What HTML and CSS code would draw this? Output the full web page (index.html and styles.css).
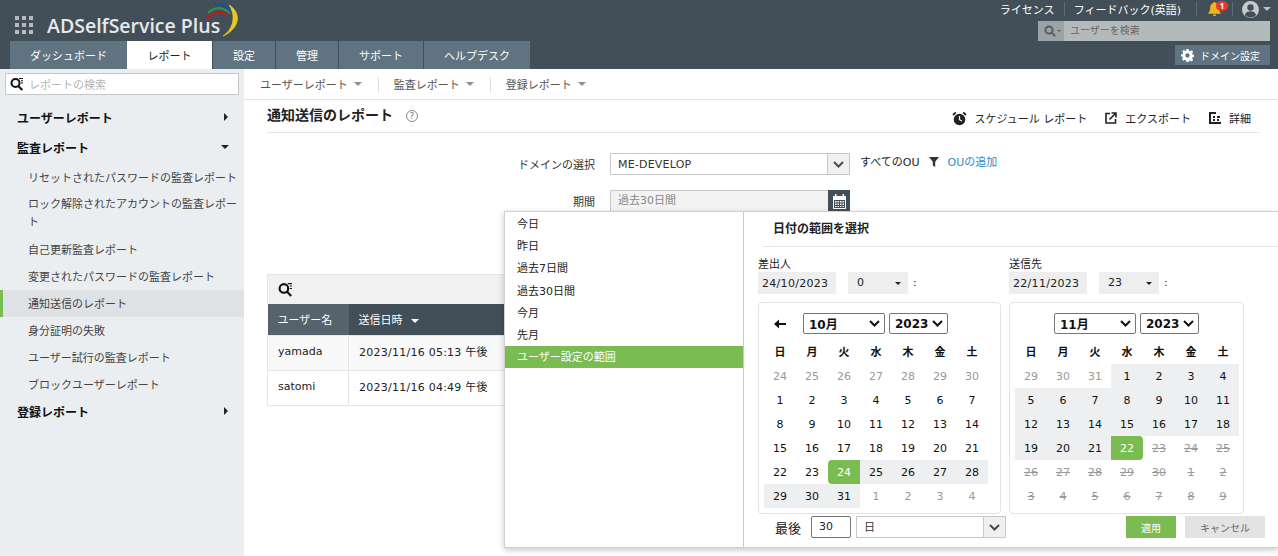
FILE: index.html
```html
<!DOCTYPE html>
<html lang="ja">
<head>
<meta charset="utf-8">
<title>ADSelfService Plus</title>
<link rel="stylesheet" href="styles.css">
</head>
<body>
<header class="topbar">
  <div class="brand-col">
    <div class="brand">
      <svg class="apps" width="18" height="18" viewBox="0 0 18 18"><g fill="#b5bbbf"><rect x="0" y="0" width="4" height="4"/><rect x="7" y="0" width="4" height="4"/><rect x="14" y="0" width="4" height="4"/><rect x="0" y="7" width="4" height="4"/><rect x="7" y="7" width="4" height="4"/><rect x="14" y="7" width="4" height="4"/><rect x="0" y="14" width="4" height="4"/><rect x="7" y="14" width="4" height="4"/><rect x="14" y="14" width="4" height="4"/></g></svg>
      <span class="logo-text">ADSelfService Plus</span>
      <svg class="logo-arcs" width="36" height="34" viewBox="0 0 36 34" fill="none">
        <path d="M2 17Q10 6 24 12" stroke="#b3202a" stroke-width="2.200"/>
        <path d="M4 10Q15 0 27 11" stroke="#3c8c3c" stroke-width="2.200"/>
        <path d="M11 2Q27 -1 32 20" stroke="#1d4f9c" stroke-width="2.800"/>
        <path d="M25 2C37 9 37 25 19 33C30 26 32 12 25 2z" fill="#e8c81c" stroke="#e8c81c" stroke-width="0.800"/>
      </svg>
    </div>
    <nav class="tabs">
      <a class="tab tab-dash">ダッシュボード</a>
      <a class="tab tab-active">レポート</a>
      <a class="tab tab-set">設定</a>
      <a class="tab tab-set">管理</a>
      <a class="tab tab-sup">サポート</a>
      <a class="tab tab-help">ヘルプデスク</a>
    </nav>
  </div>
  <div class="top-right">
    <div class="top-links">
      <span class="top-link">ライセンス</span>
      <span class="top-sep"></span>
      <span class="top-link">フィードバック(英語)</span>
      <span class="top-sep top-sep-b"></span>
      <span class="bell">
        <svg width="15" height="16" viewBox="0 0 16 16"><path fill="#f0b51e" d="M8 0.5c.8 0 1.2.5 1.2 1.100C11.500 2.200 12.600 4 12.600 6.500c0 3 .8 4.500 2 5.800v.7H1.400v-.7c1.200-1.300 2-2.800 2-5.800C3.400 4 4.500 2.200 6.800 1.600 6.800 1 7.200.5 8 .5zM6.200 13.800h3.600C9.600 15 8.900 15.600 8 15.600S6.400 15 6.200 13.800z"/></svg>
        <span class="badge">1</span>
      </span>
      <span class="top-sep top-sep-c"></span>
      <svg class="avatar" width="17" height="17" viewBox="0 0 17 17"><circle cx="8.500" cy="8.500" r="8.500" fill="#c4cacd"/><circle cx="8.500" cy="6.500" r="3.200" fill="#434f58"/><path d="M2.800 14c1-2.800 3.200-3.800 5.700-3.800s4.700 1 5.700 3.800c-1.500 1.600-3.500 2.500-5.700 2.500s-4.200-.9-5.700-2.500z" fill="#434f58"/></svg>
      <span class="caret-light"></span>
    </div>
    <div class="user-search">
      <span class="us-icon">
        <svg width="12" height="12" viewBox="0 0 12 12" fill="none" stroke="#545d63" stroke-width="2"><circle cx="5" cy="5" r="3.600"/><path d="M7.800 7.800l3.400 3.400"/></svg>
        <span class="us-caret"></span>
      </span>
      <span class="us-text">ユーザーを検索</span>
    </div>
    <button class="domain-btn">
      <svg width="13" height="13" viewBox="0 0 24 24"><path fill="#fff" d="M10 0h4l.7 3.400 2 .8L19.600 2.300l2.800 2.800-1.900 2.900.8 2 3.400.7v4l-3.400.7-.8 2 1.900 2.900-2.800 2.800-2.900-1.900-2 .8L14 24h-4l-.7-3.400-2-.8-2.900 1.900-2.800-2.800 1.900-2.900-.8-2L0 14v-4l3.400-.7.8-2L2.300 4.400l2.800-2.800L8 3.500l2-.8L10 0zm2 8a4 4 0 100 8 4 4 0 000-8z"/></svg>
      <span>ドメイン設定</span>
    </button>
  </div>
</header>

<div class="body-row">
  <aside class="sidebar">
    <div class="side-search">
      <svg width="14" height="14" viewBox="0 0 14 14" fill="none" stroke="#111" stroke-width="2"><circle cx="5.500" cy="6" r="4"/><path d="M8.500 9.200l3.800 3.800"/><path d="M9 1.500h4M11 3.800h2M11 6h2" stroke-width="1"/></svg>
      <span>レポートの検索</span>
    </div>
    <div class="side-group side-first"><span>ユーザーレポート</span><i class="tri-right"></i></div>
    <div class="side-group"><span>監査レポート</span><i class="tri-down"></i></div>
    <ul class="side-list">
      <li>リセットされたパスワードの監査レポート</li>
      <li class="side-double">ロック解除されたアカウントの監査レポート</li>
      <li>自己更新監査レポート</li>
      <li>変更されたパスワードの監査レポート</li>
      <li class="side-current">通知送信のレポート</li>
      <li>身分証明の失敗</li>
      <li>ユーザー試行の監査レポート</li>
      <li>ブロックユーザーレポート</li>
    </ul>
    <div class="side-group"><span>登録レポート</span><i class="tri-right"></i></div>
  </aside>

  <main class="main">
    <div class="subnav">
      <span class="subnav-item">ユーザーレポート<i class="tri-grey"></i></span>
      <span class="subnav-item">監査レポート<i class="tri-grey"></i></span>
      <span class="subnav-item">登録レポート<i class="tri-grey"></i></span>
    </div>
    <div class="content">
      <div class="title-row">
        <h1 class="title">通知送信のレポート</h1>
        <span class="help">?</span>
        <div class="actions">
          <span class="action">
            <svg width="15" height="15" viewBox="0 0 15 15"><circle cx="7.500" cy="8.500" r="5.800" fill="#222"/><path d="M7.500 5v3.700l2.500 1.300" fill="none" stroke="#fff" stroke-width="1.200"/><path d="M1 4l2.800-2.600M14 4l-2.800-2.600" stroke="#222" stroke-width="1.800"/></svg>
            スケジュール レポート
          </span>
          <span class="action">
            <svg width="12" height="12" viewBox="0 0 12 12" fill="none" stroke="#222" stroke-width="1.600"><path d="M5 1.500H1v9.500h9.500V7"/><path d="M4.500 7.500L10 2M6.500 1h4.500v4.500"/></svg>
            エクスポート
          </span>
          <span class="action">
            <svg width="12" height="12" viewBox="0 0 12 12" fill="#222"><path d="M0 0h2v10h10v2H0z"/><path d="M2 0h5v2H2zM4 4h2v2H4zM8 4h3v2H8zM4 7h2v2H4zM8 7h2v2H8z"/></svg>
            詳細
          </span>
        </div>
      </div>

      <div class="form">
        <div class="form-row">
          <label class="form-label">ドメインの選択</label>
          <div class="select">
            <span class="select-value select-spaced">ME-DEVELOP</span>
            <span class="select-btn"><svg width="11" height="7" viewBox="0 0 11 7" fill="none" stroke="#434f58" stroke-width="2"><path d="M1 1l4.500 4.500L10 1"/></svg></span>
          </div>
          <span class="ou-text">すべてのOU</span>
          <svg class="funnel" width="10" height="10" viewBox="0 0 10 10"><path d="M0 0h10L6.200 4.800V10L3.800 8.500V4.800z" fill="#333"/></svg>
          <a class="ou-link">OUの追加</a>
        </div>
        <div class="form-row form-row-2">
          <label class="form-label">期間</label>
          <div class="period">
            <span class="period-value">過去30日間</span>
            <span class="period-btn"><svg width="15" height="15" viewBox="0 0 15 15"><path fill="#fff" d="M1 2h2V0h1.500v2h6V0H12v2h2v13H1zm1 4v8h11V6z"/><g fill="#fff"><rect x="3" y="7" width="1.500" height="1.500"/><rect x="5.500" y="7" width="1.500" height="1.500"/><rect x="8" y="7" width="1.500" height="1.500"/><rect x="10.500" y="7" width="1.500" height="1.500"/><rect x="3" y="9.500" width="1.500" height="1.500"/><rect x="5.500" y="9.500" width="1.500" height="1.500"/><rect x="8" y="9.500" width="1.500" height="1.500"/><rect x="10.500" y="9.500" width="1.500" height="1.500"/><rect x="3" y="12" width="1.500" height="1"/><rect x="5.500" y="12" width="1.500" height="1"/><rect x="8" y="12" width="1.500" height="1"/><rect x="10.500" y="12" width="1.500" height="1"/></g></svg></span>
          </div>
        </div>
      </div>

      <section class="report">
        <div class="report-tools">
          <svg width="15" height="15" viewBox="0 0 14 14" fill="none" stroke="#111" stroke-width="2"><circle cx="5.500" cy="6" r="4"/><path d="M8.500 9.200l3.800 3.800"/><path d="M9 1.500h4M11 3.800h2M11 6h2" stroke-width="1"/></svg>
        </div>
        <table class="report-table">
          <thead>
            <tr><th class="col-user">ユーザー名</th><th class="col-date">送信日時<i class="tri-white"></i></th></tr>
          </thead>
          <tbody>
            <tr><td class="row-odd">yamada</td><td class="row-odd cell-date">2023/11/16 05:13 午後</td></tr>
            <tr><td>satomi</td><td class="cell-date">2023/11/16 04:49 午後</td></tr>
          </tbody>
        </table>
      </section>
    </div>
  </main>
</div>

<div class="picker">
  <ul class="ranges">
    <li>今日</li>
    <li>昨日</li>
    <li>過去7日間</li>
    <li>過去30日間</li>
    <li>今月</li>
    <li>先月</li>
    <li class="range-on">ユーザー設定の範囲</li>
  </ul>
  <div class="range-pane">
    <div class="pane-title">日付の範囲を選択</div>
    <div class="from-to">
      <div class="ft-col ft-from">
        <div class="ft-label">差出人</div>
        <div class="ft-inputs"><span class="ft-date">24/10/2023</span><span class="ft-hour">0<i class="tri-small"></i></span><b class="colon">:</b></div>
      </div>
      <div class="ft-col">
        <div class="ft-label">送信先</div>
        <div class="ft-inputs"><span class="ft-date">22/11/2023</span><span class="ft-hour">23<i class="tri-small"></i></span><b class="colon">:</b></div>
      </div>
    </div>
    <div class="cals">
      <div class="cal cal-left">
        <div class="cal-head">
          <svg class="arrow" width="12" height="10" viewBox="0 0 12 10"><path d="M0 5l5-4.500V4h7v2H5v3.500z" fill="#111"/></svg>
          <span class="month-box mb-m">10月<svg width="11" height="7" viewBox="0 0 11 7" fill="none" stroke="#111" stroke-width="2"><path d="M1 1l4.500 4.500L10 1"/></svg></span>
          <span class="month-box mb-y">2023<svg width="11" height="7" viewBox="0 0 11 7" fill="none" stroke="#111" stroke-width="2"><path d="M1 1l4.500 4.500L10 1"/></svg></span>
        </div>
        <div class="grid">
          <b>日</b><b>月</b><b>火</b><b>水</b><b>木</b><b>金</b><b>土</b>
          <i class="o">24</i><i class="o">25</i><i class="o">26</i><i class="o">27</i><i class="o">28</i><i class="o">29</i><i class="o">30</i>
          <i>1</i><i>2</i><i>3</i><i>4</i><i>5</i><i>6</i><i>7</i>
          <i>8</i><i>9</i><i>10</i><i>11</i><i>12</i><i>13</i><i>14</i>
          <i>15</i><i>16</i><i>17</i><i>18</i><i>19</i><i>20</i><i>21</i>
          <i>22</i><i>23</i><i class="s start">24</i><i class="r">25</i><i class="r">26</i><i class="r">27</i><i class="r">28</i>
          <i class="r">29</i><i class="r">30</i><i class="r">31</i><i class="o">1</i><i class="o">2</i><i class="o">3</i><i class="o">4</i>
        </div>
      </div>
      <div class="cal cal-right">
        <div class="cal-head cal-head-r">
          <span class="month-box mb-m">11月<svg width="11" height="7" viewBox="0 0 11 7" fill="none" stroke="#111" stroke-width="2"><path d="M1 1l4.500 4.500L10 1"/></svg></span>
          <span class="month-box mb-y">2023<svg width="11" height="7" viewBox="0 0 11 7" fill="none" stroke="#111" stroke-width="2"><path d="M1 1l4.500 4.500L10 1"/></svg></span>
        </div>
        <div class="grid">
          <b>日</b><b>月</b><b>火</b><b>水</b><b>木</b><b>金</b><b>土</b>
          <i class="o">29</i><i class="o">30</i><i class="o">31</i><i class="r">1</i><i class="r">2</i><i class="r">3</i><i class="r">4</i>
          <i class="r">5</i><i class="r">6</i><i class="r">7</i><i class="r">8</i><i class="r">9</i><i class="r">10</i><i class="r">11</i>
          <i class="r">12</i><i class="r">13</i><i class="r">14</i><i class="r">15</i><i class="r">16</i><i class="r">17</i><i class="r">18</i>
          <i class="r">19</i><i class="r">20</i><i class="r">21</i><i class="s end">22</i><i class="x">23</i><i class="x">24</i><i class="x">25</i>
          <i class="x">26</i><i class="x">27</i><i class="x">28</i><i class="x">29</i><i class="x">30</i><i class="x">1</i><i class="x">2</i>
          <i class="x">3</i><i class="x">4</i><i class="x">5</i><i class="x">6</i><i class="x">7</i><i class="x">8</i><i class="x">9</i>
        </div>
      </div>
    </div>
    <div class="pane-foot">
      <span class="last-label">最後</span>
      <span class="last-num">30</span>
      <div class="select last-unit">
        <span class="select-value">日</span>
        <span class="select-btn"><svg width="11" height="7" viewBox="0 0 11 7" fill="none" stroke="#434f58" stroke-width="2"><path d="M1 1l4.500 4.500L10 1"/></svg></span>
      </div>
      <button class="btn-apply">適用</button>
      <button class="btn-cancel">キャンセル</button>
    </div>
  </div>
</div>
</body>
</html>
```

FILE: styles.css
```css
* { box-sizing: border-box; }
html, body { margin: 0; padding: 0; height: 556px; overflow: hidden; }
body {
  position: relative;
  background: #fff;
  color: #222;
  font-family: "DejaVu Sans", "Noto Sans CJK JP", sans-serif;
  font-size: 11px;
  display: flex;
  flex-direction: column;
}
ul { list-style: none; margin: 0; padding: 0; }
i { font-style: normal; }

/* top bar */
.topbar {
  height: 69px;
  flex: none;
  background: #434f58;
  display: flex;
  justify-content: space-between;
  padding-left: 10px;
}
.brand-col { display: flex; flex-direction: column; }
.brand { height: 41px; display: flex; align-items: flex-start; padding-left: 5px; }
.apps { margin-top: 16px; }
.logo-text { margin-left: 14px; margin-top: 13px; font-size: 19.500px; line-height: 26px; font-weight: 600; color: #e6e8ea; font-family: "Open Sans", sans-serif; white-space: nowrap; }
.logo-arcs { margin-left: -16px; margin-top: 3px; flex: none; }
.tabs { display: flex; gap: 1px; height: 28px; }
.tab { display: flex; align-items: center; justify-content: center; background: #5f7380; color: #fff; font-size: 11px; }
.tab-dash { width: 117px; }
.tab-active { width: 85px; background: #fff; color: #222; margin-left: -1px; }
.tab-set { width: 62px; }
.tab-sup { width: 84px; }
.tab-help { width: 106px; }

.top-right { width: 285px; padding-right: 8px; display: flex; flex-direction: column; align-items: flex-end; }
.top-links { height: 21px; display: flex; align-items: center; color: #fff; font-size: 11px; white-space: nowrap; padding-bottom: 3px; margin-right: -1px; }
.top-link { color: #fff; }
.top-sep { width: 1px; height: 14px; background: #5f6b74; margin: 0 9px; }
.top-sep-b { margin: 0 10px 0 15px; }
.top-sep-c { margin: 0 9px 0 10px; }
.bell { position: relative; display: flex; width: 15px; height: 16px; }
.badge { position: absolute; left: 9px; top: 0; width: 12px; height: 10px; border-radius: 5px; background: #e8372f; color: #fff; font-size: 8px; line-height: 10px; text-align: center; font-weight: 700; font-family: "Open Sans", sans-serif; }
.avatar { display: block; }
.caret-light { width: 0; height: 0; margin-left: 4px; border: 4px solid transparent; border-top-color: #b7bec3; border-bottom: 0; }
.user-search { width: 232px; height: 20px; display: flex; background: #b4b9bc; }
.us-icon { width: 26px; background: #9ca3a7; display: flex; align-items: center; padding-left: 6px; gap: 1px; }
.us-caret { border: 2px solid transparent; border-top-color: #545d63; border-bottom: 0; }
.us-text { padding-left: 6px; line-height: 20px; font-size: 10px; color: #666; }
.domain-btn { width: 95px; height: 20px; margin-top: 4px; border: 0; background: #5f7380; color: #fff; display: flex; align-items: center; padding: 0 0 0 6px; gap: 6px; font: inherit; font-size: 10px; }

/* body */
.body-row { flex: 1; display: flex; min-height: 0; }
.sidebar { width: 244px; flex: none; background: #ebeef0; padding-top: 4px; }
.side-search { margin-left: 5px; width: 234px; height: 22px; background: #fff; border: 1px solid #c5c8ca; display: flex; align-items: center; padding-left: 4px; gap: 5px; color: #b5b5b5; font-size: 11px; }
.side-group { display: flex; justify-content: space-between; align-items: center; height: 30px; padding: 0 16px 0 17px; color: #111; font-weight: 700; font-size: 12px; }
.side-first { margin-top: 7px; }
.tri-right { border: 4px solid transparent; border-left-color: #222; border-right: 0; }
.tri-down { border: 4px solid transparent; border-top-color: #222; border-bottom: 0; margin-right: -1px; }
.side-list { margin-top: 2px; margin-bottom: -2px; }
.side-list li { padding: 5px 2px 3px 28px; line-height: 19px; color: #444; font-size: 11px; word-break: break-all; }
.side-list .side-double { line-height: 18px; padding-bottom: 4px; }
.side-list .side-current { background: #dfe2e4; border-left: 3px solid #7bbc52; padding-left: 25px; }

.main { flex: 1; min-width: 0; display: flex; flex-direction: column; }
.subnav { height: 31px; flex: none; border-bottom: 1px solid #e3e3e3; display: flex; align-items: center; padding-left: 16px; color: #555; font-size: 11px; }
.subnav-item { display: inline-flex; align-items: center; height: 15px; }
.subnav-item + .subnav-item { border-left: 1px solid #ddd; padding-left: 15px; margin-left: 16px; }
.tri-grey { border: 4px solid transparent; border-top-color: #8a8f93; border-bottom: 0; margin-left: 6px; }

.content { padding: 0 18px 0 23px; flex: 1; }
.title-row { height: 33px; display: flex; align-items: center; border-bottom: 1px solid #e6e6e6; }
.title { margin: 0 0 4px; font-size: 14px; font-weight: 700; color: #222; }
.help { margin-left: 13px; width: 12px; height: 12px; border: 1px solid #888; border-radius: 50%; color: #777; font-size: 9px; line-height: 10px; text-align: center; }
.actions { margin-left: auto; margin-right: 9px; padding-top: 4px; display: flex; gap: 18px; color: #222; }
.action { display: inline-flex; align-items: center; gap: 8px; font-size: 11px; }

.form { padding-top: 20px; }
.form-row { display: flex; align-items: center; height: 22px; }
.form-row-2 { margin-top: 15px; }
.form-label { width: 328px; text-align: right; font-size: 11px; color: #333; margin-right: 15px; }
.select { display: flex; width: 240px; height: 22px; border: 1px solid #c8c8c8; background: #fff; }
.select-value { flex: 1; padding: 1px 0 0 7px; line-height: 20px; font-size: 11px; color: #333; }
.select-spaced { letter-spacing: 0.2px; }
.select-btn { width: 22px; border-left: 1px solid #c8c8c8; background: #f0f0f0; display: flex; align-items: center; justify-content: center; }
.ou-text { margin-left: 10px; margin-top: -6px; font-size: 11px; color: #222; }
.funnel { margin-left: 9px; margin-top: -4px; }
.ou-link { margin-left: 9px; margin-top: -6px; color: #2d8ac7; font-size: 11px; }
.period { display: flex; width: 240px; height: 22px; }
.period-value { flex: 1; background: #f3f3f3; border: 1px solid #c8c8c8; border-right: 0; padding-left: 7px; line-height: 20px; color: #888; }
.period-btn { width: 22px; background: #434f58; display: flex; align-items: center; justify-content: center; }

.report { margin-top: 62px; }
.report-tools { height: 30px; background: #f1f1f1; border: 1px solid #e6e6e6; border-bottom: 0; display: flex; align-items: center; padding-left: 10px; }
.report-table { border-collapse: collapse; width: 100%; font-size: 11px; table-layout: fixed; }
.report-table th { height: 31px; background: #434f58; color: #fff; font-weight: 400; text-align: left; padding: 0 10px; font-size: 11px; }
.report-table .col-user { width: 81px; background: #56636c; }
.tri-white { display: inline-block; vertical-align: middle; border: 4px solid transparent; border-top-color: #fff; border-bottom: 0; margin-left: 8px; }
.report-table td { height: 35px; padding: 0 10px 3px; border: 1px solid #e6e6e6; color: #222; white-space: nowrap; }
.report-table .cell-date { letter-spacing: 0.25px; }
.row-odd { background: #f9f9f9; }

/* date picker popup */
.picker {
  position: absolute;
  left: 504px;
  top: 211px;
  width: 774px;
  height: 337px;
  background: #fff;
  border: 1px solid #d0d0d0;
  border-right: 0;
  box-shadow: 0 2px 6px rgba(0,0,0,.22);
  display: flex;
}
.ranges { width: 239px; flex: none; border-right: 1px solid #c9c9c9; padding-top: 1px; }
.ranges li { height: 22.200px; padding: 1px 0 0 12px; line-height: 22px; color: #222; font-size: 11px; }
.ranges .range-on { background: #7bbc52; color: #fff; }
.range-pane { flex: 1; min-width: 0; padding-left: 14px; }
.pane-title { margin-left: 5px; height: 35px; border-bottom: 1px solid #e3e3e3; padding: 9px 0 0 10px; font-size: 12px; font-weight: 700; color: #222; line-height: 16px; }
.from-to { display: flex; margin-top: 9px; }
.ft-col { width: 251px; }
.ft-label { font-size: 11px; line-height: 15px; color: #222; padding-top: 1px; height: 15px; }
.ft-inputs { display: flex; align-items: flex-start; margin-top: 1px; }
.ft-date { width: 78px; height: 22px; background: #eeeeee; line-height: 23px; padding-left: 4px; font-size: 11px; letter-spacing: 0.3px; }
.ft-hour { margin-left: 12px; width: 60px; height: 22px; background: #eeeeee; line-height: 22px; padding-left: 9px; display: flex; align-items: center; justify-content: space-between; padding-right: 7px; }
.tri-small { border: 3px solid transparent; border-top-color: #222; border-bottom: 0; }
.colon { margin-left: 5px; line-height: 22px; font-weight: 400; }

.cals { display: flex; gap: 8px; margin-top: 8px; }
.cal { height: 212px; border: 1px solid #e3e3e3; border-radius: 4px; padding: 10px 0 0 5px; }
.cal-left { width: 243px; }
.cal-right { width: 235px; }
.cal-head { display: flex; align-items: center; height: 21px; padding-left: 10px; gap: 4px; }
.cal-head-r { padding-left: 39px; }
.arrow { margin-right: 13px; }
.month-box { height: 21px; border: 1px solid #767676; border-radius: 2px; display: flex; align-items: center; justify-content: space-between; padding: 0 4px 0 5px; font-size: 12px; font-weight: 700; color: #111; background: #fff; }
.mb-m { width: 82px; }
.mb-y { width: 59px; }
.grid { display: grid; grid-template-columns: repeat(7, 32px); grid-auto-rows: 24px; margin-top: 6px; font-size: 11px; }
.grid b, .grid i { display: flex; align-items: center; justify-content: center; color: #111; font-weight: 400; }
.grid b { height: 24px; padding-bottom: 2px; font-weight: 700; }
.grid .o { color: #999; }
.grid .r { background: #eeeff1; }
.grid .s { background: #7bbc52; color: #fff; }
.grid .start { border-radius: 4px 0 0 4px; }
.grid .end { border-radius: 0 4px 4px 0; }
.grid .x { color: #999; text-decoration: line-through; }

.pane-foot { display: flex; align-items: center; margin-top: 2px; height: 22px; }
.last-label { margin-left: 17px; font-size: 13px; color: #222; }
.last-num { margin-left: 10px; width: 40px; height: 22px; border: 1px solid #767676; border-radius: 2px; line-height: 20px; padding-left: 7px; font-size: 11px; }
.last-unit { width: 150px; margin-left: 5px; }
.btn-apply { margin-left: 120px; width: 50px; height: 22px; border: 0; background: #7bbc52; color: #fff; font: inherit; font-size: 10px; }
.btn-cancel { margin-left: 9px; width: 80px; height: 22px; border: 0; background: #e3e3e3; color: #666; font: inherit; font-size: 10px; }
```
